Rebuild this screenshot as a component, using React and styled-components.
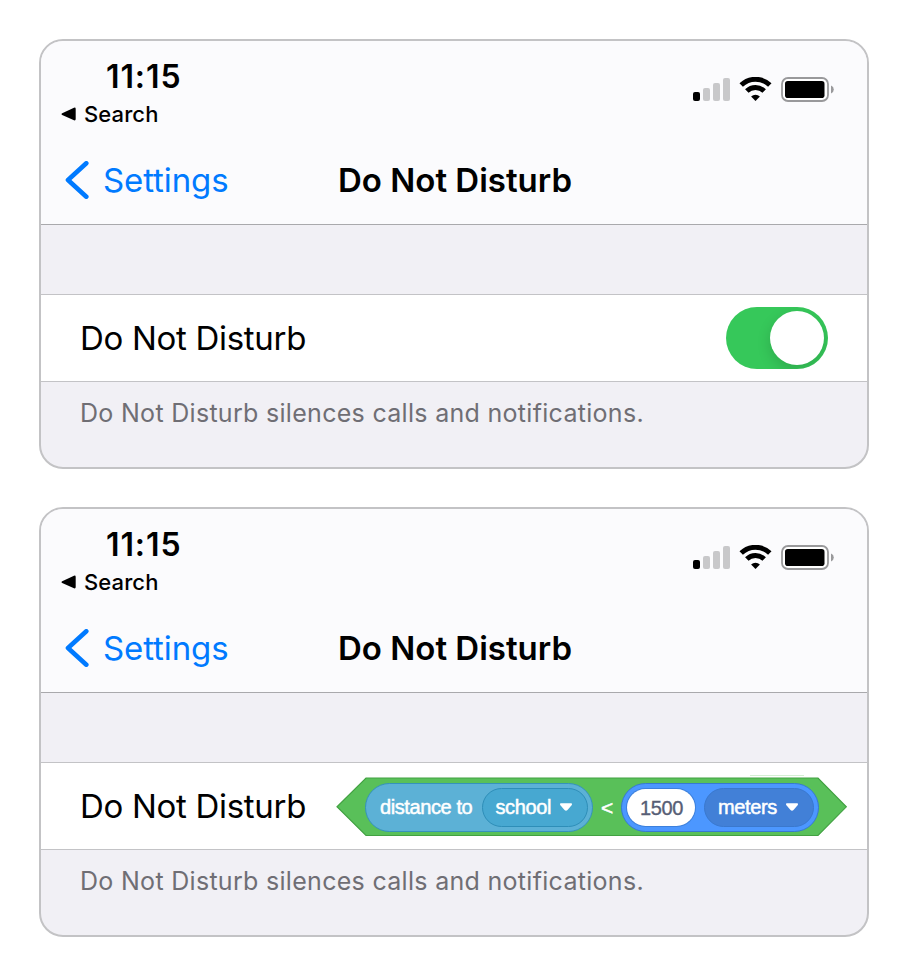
import React from "react";
import styled, { createGlobalStyle, css } from "styled-components";

const GlobalStyle = createGlobalStyle`
  * { box-sizing: border-box; }
  body {
    margin: 0;
    background: #fff;
    font-family: Inter, "Liberation Sans", sans-serif;
    color: #000;
  }
`;

const Page = styled.main`
  display: flex;
  flex-direction: column;
  gap: 38px;
  width: 908px;
  height: 976px;
  padding: 39px;
`;

const Card = styled.section`
  width: 830px;
  height: 430px;
  border: 2px solid #c3c3c5;
  border-radius: 24px;
  background: #f1f0f5;
  overflow: hidden;
`;

const Header = styled.header`
  height: 184px;
  background: #fbfbfd;
  border-bottom: 1px solid #a9a9ac;
`;

const StatusBar = styled.div`
  display: flex;
  justify-content: space-between;
  height: 96px;
  padding: 16px 32px 0 20px;
`;

const Clock = styled.div`
  padding-left: 45px;
  font-size: 32px;
  font-weight: 600;
  line-height: 40px;
  letter-spacing: 0.9px;
`;

const BackToApp = styled.div`
  display: flex;
  align-items: center;
  gap: 8px;
  margin-top: 3px;
  font-size: 22px;
  font-weight: 500;
  line-height: 28px;
  letter-spacing: 0.1px;
`;

const StatusIcons = styled.div`
  display: flex;
  align-items: flex-start;
  padding-top: 20px;
`;

const NavBar = styled.nav`
  display: grid;
  grid-template-columns: 297px 1fr;
  align-items: center;
  height: 86px;
  font-size: 33px;
  line-height: 44px;
`;

const BackLink = styled.a`
  display: flex;
  align-items: center;
  gap: 14px;
  padding-left: 24px;
  color: #007aff;
  letter-spacing: -0.1px;
`;

const Title = styled.h1`
  margin: 0;
  font-size: 33px;
  font-weight: 600;
  letter-spacing: 0;
`;

const SettingRow = styled.div`
  display: flex;
  align-items: center;
  justify-content: space-between;
  height: 88px;
  margin-top: 69px;
  padding: 0 ${(p) => (p.$wide ? 20 : 39)}px 0 39px;
  background: #fff;
  border: solid #c3c3c6;
  border-width: 1px 0;
`;

const RowLabel = styled.span`
  font-size: 33px;
  line-height: 44px;
  letter-spacing: -0.3px;
  white-space: nowrap;
`;

const Footnote = styled.p`
  margin: 14px 0 0 39px;
  color: #6f6e74;
  font-size: 25px;
  line-height: 34px;
  letter-spacing: 0.3px;
  white-space: nowrap;
`;

const Switch = styled.div`
  display: flex;
  justify-content: flex-end;
  width: 102px;
  height: 62px;
  padding: 4px;
  border-radius: 31px;
  background: #36c85a;
  overflow: hidden;
`;

const Knob = styled.div`
  width: 54px;
  height: 54px;
  border-radius: 50%;
  background: #fff;
  box-shadow: 0 5px 14px rgba(0, 0, 0, 0.15);
`;

const Condition = styled.div`
  position: relative;
  display: flex;
  align-items: center;
  width: 511px;
  height: 60px;
  margin-top: 2px;
  padding: 0 28px 0 29px;
  font-family: "Liberation Sans", Arial, sans-serif;
  font-size: 20px;
  line-height: 24px;
  letter-spacing: -0.4px;
  color: #fff;
  -webkit-text-stroke: 0.5px currentColor;
`;

const Outline = styled.svg`
  position: absolute;
  inset: 0;
  overflow: visible;
`;

const palettes = {
  sensing: css`
    background: #5cb1d6;
    border-color: #3592bb;
  `,
  motion: css`
    background: #4c97ff;
    border-color: #3679d0;
  `,
};

const menuPalettes = {
  sensing: css`
    background: #47a8d1;
    border-color: #2e8eb8;
  `,
  motion: css`
    background: #4280d7;
    border-color: #3a78ce;
  `,
};

const Reporter = styled.div`
  position: relative;
  display: flex;
  align-items: center;
  justify-content: space-between;
  width: ${(p) => p.$width}px;
  height: 49px;
  padding: 0 4px 0 ${(p) => p.$inset}px;
  border: 1px solid;
  border-radius: 25px;
  ${(p) => palettes[p.$tone]}
`;

const Dropdown = styled.div`
  display: flex;
  align-items: center;
  justify-content: space-between;
  width: ${(p) => p.$width}px;
  height: 39px;
  padding: 0 14px 0 13px;
  border: 1px solid;
  border-radius: 20px;
  ${(p) => menuPalettes[p.$tone]}
`;

const NumberField = styled.div`
  width: 68px;
  height: 37px;
  border-radius: 19px;
  background: #fff;
  box-shadow: 0 0 0 1px #3d80dc;
  color: #575e75;
  line-height: 38px;
  text-align: center;
  -webkit-text-stroke: 0.35px currentColor;
`;

const Operator = styled.span`
  position: relative;
  width: 29px;
  padding-top: 2px;
  font-size: 21px;
  text-align: center;
`;

function SignalIcon() {
  return (
    <svg width="38" height="24" viewBox="0 0 38 24">
      <rect x="0" y="15" width="7" height="9" rx="2" fill="#000" />
      <rect x="10" y="11" width="7" height="13" rx="2" fill="#c8c8ca" />
      <rect x="20" y="6" width="7" height="18" rx="2" fill="#c8c8ca" />
      <rect x="30" y="1" width="7" height="23" rx="2" fill="#c8c8ca" />
    </svg>
  );
}

const WifiSvg = styled.svg`
  margin: 0 9px 0 8px;
`;

function WifiIcon() {
  return (
    <WifiSvg width="33" height="24" viewBox="0 0 33 24">
      <g fill="none" stroke="#000" strokeWidth="4.9">
        <path d="M2.2 8.1A20.4 20.4 0 0 1 30.8 8.1" />
        <path d="M7.8 14A12.4 12.4 0 0 1 25.2 14" />
      </g>
      <path d="M16.5 24L12.1 19.5A6.6 6.6 0 0 1 20.9 19.5Z" />
    </WifiSvg>
  );
}

function BatteryIcon() {
  return (
    <svg width="54" height="25" viewBox="0 0 54 25">
      <rect x="1" y="1" width="46" height="23" rx="6" fill="#fff" stroke="#99999b" strokeWidth="1.8" />
      <rect x="4" y="4" width="39.5" height="17" rx="2.8" />
      <path d="M50 8.5Q52.8 9.6 52.8 12.5T50 16.5Z" fill="#99999b" />
    </svg>
  );
}

function Caret() {
  return (
    <svg width="14" height="10" viewBox="0 0 14 10">
      <path
        d="M1.8 1.3H12.2Q13.6 1.6 12.8 2.9L8.5 8Q7 9.4 5.5 8L1.2 2.9Q.4 1.6 1.8 1.3Z"
        fill="#fff"
      />
    </svg>
  );
}

function ConditionBlock() {
  return (
    <Condition>
      <Outline width="511" height="60" viewBox="0 0 511 60">
        <path d="M414 -1.5H468" stroke="#d3efd3" />
        <path
          d="M30 1H482L510.3 29.8L482 58.5H30L1 29.8Z"
          fill="#59c059"
          stroke="#42a142"
          strokeWidth="1.2"
        />
      </Outline>
      <Reporter $tone="sensing" $width={228} $inset={14}>
        distance to
        <Dropdown $tone="sensing" $width={106}>
          school
          <Caret />
        </Dropdown>
      </Reporter>
      <Operator>&lt;</Operator>
      <Reporter $tone="motion" $width={198} $inset={5}>
        <NumberField>1500</NumberField>
        <Dropdown $tone="motion" $width={110}>
          meters
          <Caret />
        </Dropdown>
      </Reporter>
    </Condition>
  );
}

function SettingsCard({ wide, children }) {
  return (
    <Card>
      <Header>
        <StatusBar>
          <div>
            <Clock>11:15</Clock>
            <BackToApp>
              <svg width="15" height="14" viewBox="0 0 15 14">
                <path d="M1.2 6.2L13 .7Q14.7 .2 14.7 2V12Q14.7 13.8 13 13.3L1.2 7.9Q-.3 7 1.2 6.2Z" />
              </svg>
              Search
            </BackToApp>
          </div>
          <StatusIcons>
            <SignalIcon />
            <WifiIcon />
            <BatteryIcon />
          </StatusIcons>
        </StatusBar>
        <NavBar>
          <BackLink>
            <svg width="24" height="38" viewBox="0 0 24 38">
              <path
                d="M21.3 2.3L3 19L21.3 35.7"
                fill="none"
                stroke="#007aff"
                strokeWidth="4.6"
                strokeLinecap="round"
                strokeLinejoin="round"
              />
            </svg>
            Settings
          </BackLink>
          <Title>Do Not Disturb</Title>
        </NavBar>
      </Header>
      <SettingRow $wide={wide}>
        <RowLabel>Do Not Disturb</RowLabel>
        {children}
      </SettingRow>
      <Footnote>Do Not Disturb silences calls and notifications.</Footnote>
    </Card>
  );
}

export default function App() {
  return (
    <>
      <GlobalStyle />
      <Page>
        <SettingsCard>
          <Switch role="switch" aria-checked="true">
            <Knob />
          </Switch>
        </SettingsCard>
        <SettingsCard wide>
          <ConditionBlock />
        </SettingsCard>
      </Page>
    </>
  );
}
